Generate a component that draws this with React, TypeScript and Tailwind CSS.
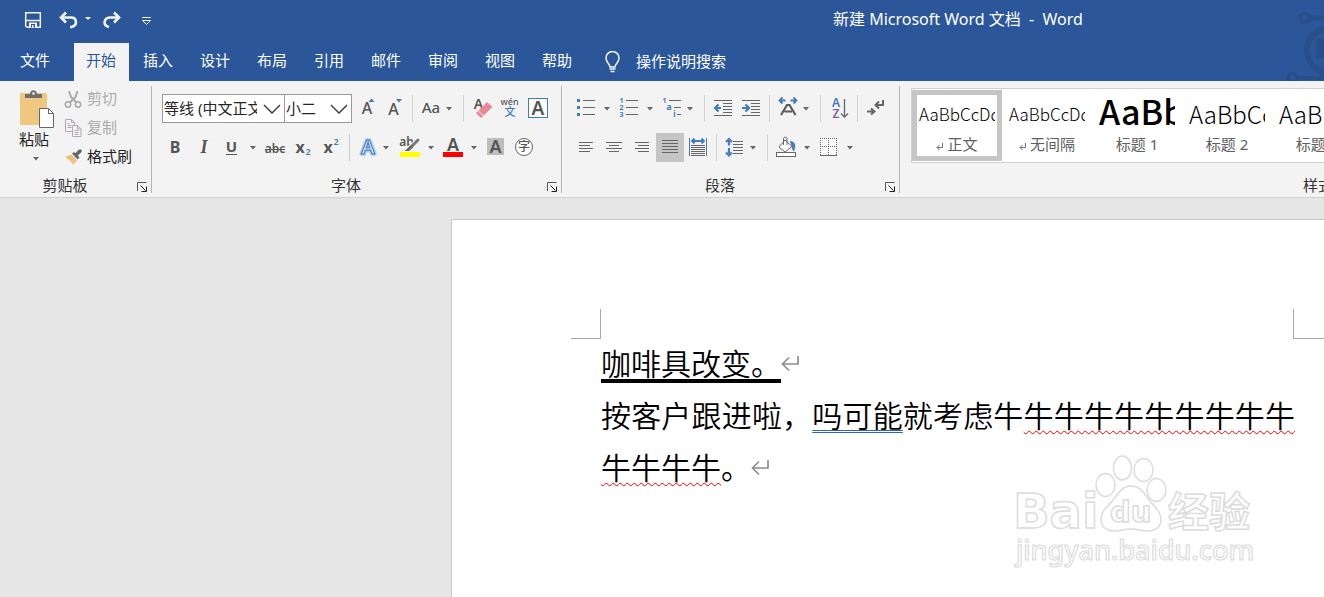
import type { ReactNode } from "react";

const INK = "#666666";
const BLUE = "#3f7cb8";
const UI = "'Noto Sans','Noto Sans CJK SC',sans-serif";

function Caret({ x }: { x: number }) {
  return <path d={`M${x - 3} 13h6l-3 3.5z`} fill={INK} />;
}

function Lines({ rows }: { rows: [number, number, number][] }) {
  return (
    <g stroke={INK} strokeWidth="1">
      {rows.map(([x1, x2, y], i) => (
        <line key={i} x1={x1} x2={x2} y1={y} y2={y} />
      ))}
    </g>
  );
}

type GlyphProps = {
  x: number;
  y: number;
  size: number;
  children: string;
  fill?: string;
  weight?: number;
  family?: string;
  style?: "italic";
};

function Glyph({ x, y, size, children, fill = "#555555", weight = 500, family = UI, style }: GlyphProps) {
  return (
    <text x={x} y={y} fontSize={size} fill={fill} fontWeight={weight} fontFamily={family} fontStyle={style} textAnchor="middle">
      {children}
    </text>
  );
}

const toolWidths = {
  small: "w-[27px]",
  single: "w-[28px]",
  menu: "w-[42px]",
  split: "w-[43px]",
};

function Tool({
  label,
  size = "single",
  active = false,
  children,
}: {
  label: string;
  size?: keyof typeof toolWidths;
  active?: boolean;
  children: ReactNode;
}) {
  return (
    <button
      type="button"
      aria-label={label}
      title={label}
      aria-pressed={active || undefined}
      className={`h-[29px] shrink-0 ${toolWidths[size]} ${active ? "bg-[#c5c5c5]" : "hover:bg-[#d8d8d8]"}`}
    >
      <svg className="block h-full w-full overflow-visible" aria-hidden="true">
        {children}
        {size === "menu" && <Caret x={32} />}
        {size === "split" && <Caret x={35} />}
      </svg>
    </button>
  );
}

function Divider() {
  return <span className="mx-1 h-[27px] w-px shrink-0 bg-[#d0d0d0]" />;
}

function Combo({ label, value, width }: { label: string; value: string; width: string }) {
  return (
    <div className={`relative h-[29px] shrink-0 ${width}`}>
      <select
        aria-label={label}
        defaultValue={value}
        className="h-full w-full appearance-none border border-[#999999] bg-white pr-[27px] pl-px text-[15px] text-[#262626]"
      >
        <option>{value}</option>
      </select>
      <svg className="pointer-events-none absolute top-[10px] right-1 h-[10px] w-[18px]" fill="none" stroke="#333" strokeWidth="1.3" aria-hidden="true">
        <path d="M1 1l8 8 8-8" />
      </svg>
    </div>
  );
}

function Group({ title, launcher = true, className = "", children }: { title: string; launcher?: boolean; className?: string; children: ReactNode }) {
  return (
    <section className={`flex min-h-[107px] shrink-0 flex-col justify-between ${launcher ? "border-r border-[#b4b4b4]" : ""} ${className}`}>
      {children}
      <footer className="flex h-[16px] items-center text-[15px] leading-[16px] text-[#333]">
        <span className="flex-1 text-center">{title}</span>
        {launcher && (
          <button type="button" aria-label={`${title}设置`} className="h-[14px] w-[21px] pt-1 pl-[7px]">
            <svg className="h-[10px] w-[10px]" fill="none" stroke="#555" aria-hidden="true">
              <path d="M.5 9V.5H9.500" />
              <path d="M3.500 3.500l5 5M9.500 4.500v5h-5" stroke="#222" />
            </svg>
          </button>
        )}
      </footer>
    </section>
  );
}

function ReturnMark() {
  return (
    <svg className="inline-block h-[18px] w-[18px] align-[2px]" fill="none" stroke="#8f8f8f" strokeWidth="1.7" aria-hidden="true">
      <path d="M17 1v8H1.500M8 2.500L1.500 9 8 15.500" />
    </svg>
  );
}

const tabs = ["开始", "插入", "设计", "布局", "引用", "邮件", "审阅", "视图", "帮助"];

function TitleBar() {
  return (
    <div className="flex h-[43px] items-center pb-1">
      <div className="flex w-[833px] shrink-0 items-center pl-[24px]">
        <button type="button" aria-label="保存" className="w-[34px]">
          <svg className="block h-[18px] w-[18px]" fill="none" stroke="#f3f3f3" aria-hidden="true">
            <path d="M1.700 1.700h14.600v14.600H3.500L1.700 15z" strokeWidth="1.5" />
            <path d="M2 9.500h14" strokeWidth="1.5" />
            <path d="M5 16.500v-5h8v5" fill="#f3f3f3" stroke="none" />
            <path d="M7 13h4v3.500H9.500V14H8v2.500H7z" fill="#2b579a" stroke="none" />
          </svg>
        </button>
        <button type="button" aria-label="撤消" className="w-[44px]">
          <svg className="block h-[18px] w-[36px]" fill="none" stroke="#f3f3f3" strokeWidth="2.6" aria-hidden="true">
            <path d="M3 6.500h10c6 0 7 8 .5 9.500H12" />
            <path d="M8 1.500L3 6.500l5 5" />
            <path d="M27 6h6l-3 3z" fill="#f3f3f3" stroke="none" />
          </svg>
        </button>
        <button type="button" aria-label="恢复" className="w-[39px]">
          <svg className="block h-[18px] w-[20px]" fill="none" stroke="#f3f3f3" strokeWidth="2.6" aria-hidden="true">
            <path d="M17 6.500H8C1.500 7 .5 14.500 7 16" />
            <path d="M12 1.500l5 5-5 5" />
          </svg>
        </button>
        <button type="button" aria-label="自定义快速访问工具栏">
          <svg className="mt-1 block h-[9px] w-[11px]" fill="none" stroke="#f3f3f3" aria-hidden="true">
            <path d="M1 .5h9M1.500 3.500h8l-4 4z" />
          </svg>
        </button>
      </div>
      <h1 className="pb-[2px] text-[16px] leading-[22px] whitespace-nowrap text-white">新建 Microsoft Word 文档&nbsp; -&nbsp; Word</h1>
    </div>
  );
}

function TabBar() {
  return (
    <nav className="flex h-[38px] text-[15px] text-white">
      <button type="button" className="mr-1 w-[70px] shrink-0 pb-1">
        文件
      </button>
      <div className="flex shrink-0 gap-[2px]">
        {tabs.map((tab, i) => (
          <button key={tab} type="button" className={`w-[55px] pr-px pb-1 ${i === 0 ? "bg-[#f3f3f3] text-[#2b579a]" : ""}`}>
            {tab}
          </button>
        ))}
      </div>
      <label className="flex items-center gap-[16px] pl-[20px]">
        <svg className="h-[22px] w-[15px]" fill="none" stroke="#f3f3f3" strokeWidth="1.5" aria-hidden="true">
          <path d="M5 16c0-3-4-4.500-4-9a6.500 6.500 0 0113 0c0 4.500-4 6-4 9z" />
          <path d="M4.500 18h6M5.500 20.500h4" />
        </svg>
        <input aria-label="操作说明搜索" placeholder="操作说明搜索" className="w-[140px] bg-transparent pb-px text-[15px] outline-none placeholder:text-white" />
      </label>
    </nav>
  );
}

function ClipboardGroup() {
  return (
    <Group title="剪贴板" className="w-[152px]">
      <div className="flex items-start pl-[15px]">
        <button type="button" className="mt-1 flex w-[49px] flex-col items-start pl-1 text-[15px] leading-[20px] text-[#222]">
          <svg className="h-[39px] w-[36px]" aria-hidden="true">
            <rect x="1" y="3" width="27" height="32" rx="1" fill="#edc87e" />
            <path d="M6 8V4h5c0-5 7-5 7 0h5v4z" fill="#6f6f6f" />
            <circle cx="14.500" cy="3.500" r="1.300" fill="#f3f3f3" />
            <path d="M20.500 18.500h9l5 5v14h-14z" fill="#fff" stroke="#666" />
            <path d="M29.500 18.500v5h5" fill="none" stroke="#666" />
          </svg>
          粘贴
          <svg className="h-[14px] w-[36px]" aria-hidden="true">
            <path d="M14 8h6l-3 3.500z" fill="#666" />
          </svg>
        </button>
        <div className="-mt-[2px] flex flex-col text-[15px] leading-[29px]">
          <button type="button" disabled className="flex items-center gap-[5px] text-[#ababab]">
            <svg className="h-[18px] w-[18px]" fill="none" stroke="#a9a9a9" strokeWidth="1.5" aria-hidden="true">
              <path d="M5 1l2 6 5.500 5.500M13.500 1l-2 6L6 12.500" strokeWidth="2" />
              <circle cx="4" cy="14.500" r="2.700" />
              <circle cx="14" cy="14.500" r="2.700" />
            </svg>
            剪切
          </button>
          <button type="button" disabled className="flex items-center gap-[5px] text-[#ababab]">
            <svg className="h-[18px] w-[18px]" fill="#f3f3f3" stroke="#b3a9b3" aria-hidden="true">
              <path d="M1.500.5h6l3 3v9h-9zM7.500.5v3h3M3.500 4.500h2M3.500 6.500h4M3.500 8.500h4" />
              <path d="M8.500 6.500h5l3.500 3.500v7.500h-8.500zM13.500 6.500v3.500h3M10.500 11.500h4M10.500 13.500h4M10.500 15.500h4" />
            </svg>
            复制
          </button>
          <button type="button" className="flex items-center gap-[5px] text-[#222]">
            <svg className="h-[18px] w-[18px]" aria-hidden="true">
              <path d="M1 9l6-2.500 6 6L9 17C7.500 13.500 5 12 1 9z" fill="#edc17e" />
              <path d="M8 5.500l2-1.500 5.500 5.500-2 2z" fill="#666" />
              <path d="M12.500 6.500L16 3" stroke="#666" strokeWidth="3.500" strokeLinecap="round" />
            </svg>
            格式刷
          </button>
        </div>
      </div>
    </Group>
  );
}

function FontGroup() {
  return (
    <Group title="字体" className="w-[410px]">
      <div className="flex flex-col gap-[10px] pt-2 pl-[10px]">
        <div className="flex items-center">
          <Combo label="字体" value="等线 (中文正文)" width="w-[123px]" />
          <div className="-ml-px mr-[2px] flex">
            <Combo label="字号" value="小二" width="w-[68px]" />
          </div>
          <Tool label="增大字号" size="small">
            <Glyph x={13} y={20} size={16}>A</Glyph>
            <path d="M14.500 8l3-3.500 3 3.500z" fill={BLUE} />
          </Tool>
          <Tool label="减小字号" size="small">
            <Glyph x={12.500} y={21} size={16}>A</Glyph>
            <path d="M15 5h6l-3 3.500z" fill={BLUE} />
          </Tool>
          <Divider />
          <Tool label="更改大小写" size="menu">
            <Glyph x={14} y={19} size={15}>Aa</Glyph>
          </Tool>
          <Divider />
          <Tool label="清除所有格式">
            <Glyph x={10.500} y={15} size={14} weight={600}>A</Glyph>
            <path d="M19 8l5.500 5L13 24l-5-5z" fill="#e8869a" />
            <path d="M10 16.500l5.500 5.500" stroke="#f3f3f3" />
          </Tool>
          <Tool label="拼音指南">
            <Glyph x={13.500} y={11} size={9}>wén</Glyph>
            <Glyph x={14} y={22} size={11} fill={BLUE}>文</Glyph>
          </Tool>
          <Tool label="字符边框">
            <rect x="4.500" y="4.500" width="19" height="19" fill="#fff" stroke={BLUE} />
            <Glyph x={14} y={21} size={19} weight={600}>A</Glyph>
          </Tool>
        </div>
        <div className="flex items-center">
          <Tool label="加粗">
            <Glyph x={13} y={20} size={16} weight={700}>B</Glyph>
          </Tool>
          <Tool label="倾斜">
            <Glyph x={14} y={20} size={18} weight={700} family="'Liberation Serif',serif" style="italic">I</Glyph>
          </Tool>
          <Tool label="下划线" size="split">
            <Glyph x={13.500} y={19} size={15} weight={700}>U</Glyph>
            <path d="M8 21.500h11" stroke="#555" />
          </Tool>
          <Tool label="删除线">
            <Glyph x={14} y={20} size={12} weight={600}>abc</Glyph>
            <path d="M4 16.500h20" stroke="#555" />
          </Tool>
          <Tool label="下标">
            <Glyph x={11} y={20} size={16} weight={700}>x</Glyph>
            <Glyph x={19} y={22} size={9} fill={BLUE} weight={600}>2</Glyph>
          </Tool>
          <Tool label="上标">
            <Glyph x={11} y={20} size={16} weight={700}>x</Glyph>
            <Glyph x={19} y={12} size={9} fill={BLUE} weight={600}>2</Glyph>
          </Tool>
          <Divider />
          <Tool label="文本效果" size="menu">
            <g fontSize="20" fontFamily={UI} fontWeight="600" textAnchor="middle" fill="#fff">
              <text x="14" y="21" stroke="#b9d5f0" strokeWidth="4" strokeLinejoin="round">A</text>
              <text x="14" y="21" stroke="#3f7cc4" strokeWidth="1.2">A</text>
            </g>
          </Tool>
          <Tool label="突出显示颜色" size="split">
            <Glyph x={10.500} y={13} size={12} weight={600}>ab</Glyph>
            <rect x="4" y="19" width="20" height="5" fill="#ffff00" />
            <path d="M22 7l-8 8" stroke="#f3f3f3" strokeWidth="5" />
            <path d="M22 7l-7 7" stroke="#777" strokeWidth="3" strokeLinecap="round" />
            <path d="M15 12l2 2.500-4 3.500H8.500z" fill="#666" />
          </Tool>
          <Tool label="字体颜色" size="split">
            <Glyph x={14} y={18} size={18} weight={600}>A</Glyph>
            <rect x="4" y="19" width="20" height="5" fill="#ff0000" />
          </Tool>
          <Tool label="字符底纹">
            <rect x="5" y="5" width="17" height="17" fill="#bdbdbd" />
            <Glyph x={13.500} y={20} size={18} weight={600}>A</Glyph>
          </Tool>
          <Tool label="带圈字符">
            <circle cx="14" cy="14" r="8.500" fill="#fff" stroke={INK} />
            <Glyph x={14} y={18} size={12}>字</Glyph>
          </Tool>
        </div>
      </div>
    </Group>
  );
}

function ParagraphGroup() {
  return (
    <Group title="段落" className="w-[338px]">
      <div className="flex flex-col gap-[10px] pt-2 pl-[10px]">
        <div className="flex items-center">
          <Tool label="项目符号" size="split">
            <path d="M5 5h3v3H5zM5 12h3v3H5zM5 19h3v3H5z" fill={BLUE} />
            <Lines rows={[[11, 23, 6.5], [11, 23, 13.5], [11, 23, 20.5]]} />
          </Tool>
          <Tool label="编号" size="split">
            <Glyph x={6.500} y={9} size={7} fill={BLUE} weight={700}>1</Glyph>
            <Glyph x={6.500} y={16} size={7} fill={BLUE} weight={700}>2</Glyph>
            <Glyph x={6.500} y={23} size={7} fill={BLUE} weight={700}>3</Glyph>
            <Lines rows={[[11, 23, 6.5], [11, 23, 13.5], [11, 23, 20.5]]} />
          </Tool>
          <Tool label="多级列表" size="menu">
            <Glyph x={6.500} y={9} size={7} fill={BLUE} weight={700}>1</Glyph>
            <Glyph x={11} y={16} size={9} fill={BLUE} weight={700}>a</Glyph>
            <Glyph x={16.500} y={23} size={8} fill={BLUE} weight={700}>i</Glyph>
            <Lines rows={[[11, 23, 6.5], [16, 23, 13.5], [19, 23, 20.5]]} />
          </Tool>
          <Divider />
          <Tool label="减少缩进量">
            <Lines rows={[[5, 23, 6.5], [14, 23, 9.5], [14, 23, 12.5], [14, 23, 15.5], [14, 23, 18.5], [5, 23, 21.5]]} />
            <path d="M12 14H6.500M9.500 10.500L6 14l3.500 3.500" stroke={BLUE} strokeWidth="2.2" fill="none" />
          </Tool>
          <Tool label="增加缩进量">
            <Lines rows={[[5, 23, 6.5], [14, 23, 9.5], [14, 23, 12.5], [14, 23, 15.5], [14, 23, 18.5], [5, 23, 21.5]]} />
            <path d="M5 14h6.500M8.500 10.500L12 14l-3.500 3.500" stroke={BLUE} strokeWidth="2.2" fill="none" />
          </Tool>
          <Divider />
          <Tool label="中文版式" size="menu">
            <path d="M11.500 6.500H6M8.500 3.500l-3 3 3 3M16.500 6.500H22M19.500 3.500l3 3-3 3" stroke={BLUE} strokeWidth="1.8" fill="none" />
            <path d="M7 21l6-10h2.500l6 10M10.500 17.500h7.500" stroke="#5c5c5c" strokeWidth="2.2" fill="none" />
          </Tool>
          <Divider />
          <Tool label="排序">
            <Glyph x={11} y={13} size={12} fill={BLUE} weight={600}>A</Glyph>
            <Glyph x={11} y={24} size={12} fill="#8a52a8" weight={600}>Z</Glyph>
            <path d="M19.500 5v18M16 19.500l3.500 3.500 3.500-3.500" stroke={INK} strokeWidth="1.300" fill="none" />
          </Tool>
          <Divider />
          <Tool label="显示编辑标记">
            <path d="M21 6v5h-7M17 7.500L13.500 11l3.500 3.500M5 17.500h7M9 14.500l3.500 3-3.500 3" stroke={INK} strokeWidth="2" fill="none" />
          </Tool>
        </div>
        <div className="flex items-center">
          <Tool label="左对齐">
            <Lines rows={[[7, 21, 9.5], [7, 18, 12.5], [7, 21, 15.5], [7, 18, 18.5]]} />
          </Tool>
          <Tool label="居中">
            <Lines rows={[[6, 22, 9.5], [9, 19, 12.5], [6, 22, 15.5], [9, 19, 18.5]]} />
          </Tool>
          <Tool label="右对齐">
            <Lines rows={[[7, 21, 9.5], [10, 21, 12.5], [7, 21, 15.5], [10, 21, 18.5]]} />
          </Tool>
          <Tool label="两端对齐" active>
            <Lines rows={[[6, 22, 7.5], [6, 22, 10.5], [6, 22, 13.5], [6, 22, 16.5], [6, 22, 19.5]]} />
          </Tool>
          <Tool label="分散对齐">
            <path d="M5.500 5v18M22.500 5v18" stroke={BLUE} />
            <path d="M8 8h12M10.500 5.500L8 8l2.500 2.500M17.500 5.500L20 8l-2.500 2.500" stroke={BLUE} strokeWidth="1.800" fill="none" />
            <Lines rows={[[7, 21, 12.5], [7, 21, 14.5], [7, 21, 16.5], [7, 21, 18.5], [7, 21, 20.5], [7, 21, 22.5]]} />
          </Tool>
          <Divider />
          <Tool label="行和段落间距" size="menu">
            <path d="M8 6v6.500M5 9l3-3 3 3M8 15v7M5 19.500l3 3 3-3" stroke="#4a7cc4" strokeWidth="2.2" fill="none" />
            <Lines rows={[[12, 22, 8.5], [12, 22, 11.5], [12, 22, 14.5], [12, 22, 17.5], [12, 22, 20.5]]} />
          </Tool>
          <Divider />
          <Tool label="底纹" size="split">
            <path d="M13 7l7 6.500-7 5.500-6-5z" fill="#fff" stroke={INK} />
            <path d="M11.500 12V6c0-2.500 3.500-2.500 3.500 0v6" stroke={INK} fill="none" />
            <path d="M18 8c5 .5 6.500 4 4 10.500-1-1-2-2-2-4z" fill={BLUE} />
            <rect x="4.500" y="19.500" width="19" height="4" fill="#fff" stroke={INK} />
          </Tool>
          <Tool label="边框" size="split">
            <rect x="5" y="5" width="17" height="17" fill="#fff" />
            <path d="M5.500 5v17M21.500 5v17M13.500 5v17M5 5.500h17M5 13.500h17" stroke={INK} strokeDasharray="1 1" />
            <path d="M5 22.500h17" stroke={INK} />
          </Tool>
        </div>
      </div>
    </Group>
  );
}

const styles = [
  { name: "正文", mark: true, sample: "AaBbCcDd", look: "text-[17px] font-light" },
  { name: "无间隔", mark: true, sample: "AaBbCcDd", look: "text-[17px] font-light" },
  { name: "标题 1", mark: false, sample: "AaBbCc", look: "pb-2 text-[34px] font-medium" },
  { name: "标题 2", mark: false, sample: "AaBbCc", look: "text-[24px] font-light" },
  { name: "标题 3", mark: false, sample: "AaBbCc", look: "text-[24px] font-light" },
];

function StylesGroup() {
  return (
    <Group title="样式" launcher={false} className="w-[825px] pl-[11px]">
      <div className="mt-[2px] flex h-[75px] overflow-hidden border border-[#d0d0d0] bg-white py-px">
        {styles.map((style, i) => (
          <button
            key={style.name}
            type="button"
            className={`flex w-[90px] shrink-0 flex-col items-center border-[5px] px-[2px] ${i === 0 ? "border-[#c5c5c5]" : "border-transparent"}`}
          >
            <span className={`flex h-[38px] w-full items-center overflow-hidden whitespace-nowrap font-['Noto_Sans_CJK_SC',sans-serif] text-black ${style.look}`}>
              {style.sample}
            </span>
            <span className="flex items-center gap-1 text-[15px] leading-[22px] whitespace-nowrap text-[#606060]">
              {style.mark && (
                <svg className="mt-1 h-[7px] w-[7px]" fill="none" stroke="#707070" aria-hidden="true">
                  <path d="M6.500 0v4.500H1M3.500 2L1 4.500 3.500 7" />
                </svg>
              )}
              {style.name}
            </span>
          </button>
        ))}
      </div>
    </Group>
  );
}

function HeaderArt() {
  return (
    <svg className="pointer-events-none absolute top-0 right-0 h-[81px] w-[40px]" fill="none" stroke="#284f8a" aria-hidden="true">
      <circle cx="20.500" cy="18" r="4.500" strokeWidth="3.600" />
      <path d="M25 18h15" strokeWidth="5" />
      <circle cx="45" cy="50.500" r="22" strokeWidth="6" />
      <path d="M32 38h8v21h-8z" fill="#284f8a" stroke="none" />
      <circle cx="8.500" cy="78" r="4.500" strokeWidth="3.600" />
      <path d="M13 78h27" strokeWidth="4" />
    </svg>
  );
}

function Watermark() {
  return (
    <svg className="pointer-events-none absolute top-[232px] left-[560px] h-[124px] w-[245px]" fill="#fff" stroke="#dcdcdc" strokeWidth="1.5" aria-hidden="true">
      <ellipse cx="110.500" cy="16" rx="9" ry="12" />
      <ellipse cx="131.500" cy="18" rx="9.500" ry="11.500" />
      <ellipse cx="93.500" cy="33" rx="9.500" ry="11.500" />
      <ellipse cx="144.500" cy="38" rx="9.500" ry="11.500" />
      <path d="M119 34c9 0 12 6 18 14 7 8 12 12 12 20 0 7-6 11-13 11-7 0-10-2-17-2s-10 2-17 2c-8 0-13-5-13-12 0-8 6-11 12-19 6-8 10-14 18-14z" />
      <g fontWeight="700" fontFamily="'DejaVu Sans',sans-serif">
        <text x="1" y="76" fontSize="48">Bai</text>
        <text x="98" y="70" fontSize="29">du</text>
        <text x="156" y="75" fontSize="41" fontFamily="'Noto Sans CJK SC',sans-serif">经验</text>
      </g>
      <text x="4" y="108" fontSize="27" fontWeight="500" fontFamily="'Noto Sans',sans-serif" strokeWidth="1.200">jingyan.baidu.com</text>
    </svg>
  );
}

export default function App() {
  return (
    <div className="flex min-h-screen flex-col overflow-hidden bg-[#e6e6e6] font-['Noto_Sans','Noto_Sans_CJK_SC',sans-serif]">
      <header className="relative bg-[#2b579a]">
        <HeaderArt />
        <TitleBar />
        <TabBar />
      </header>
      <div className="flex overflow-hidden border-b border-[#d0d0d0] bg-[#f3f3f3] pt-[5px] pb-1">
        <ClipboardGroup />
        <FontGroup />
        <ParagraphGroup />
        <StylesGroup />
      </div>
      <main className="flex flex-1 overflow-hidden pt-[21px] pl-[451px]">
        <article className="relative w-[992px] shrink-0 border-t border-l border-[#c6c6c6] bg-white pt-[89px]">
          <div className="flex justify-between px-[119px]" aria-hidden="true">
            <span className="h-[30px] w-[30px] border-r border-b border-[#a8a8a8]" />
            <span className="h-[30px] w-[31px] border-b border-l border-[#a8a8a8]" />
          </div>
          <div className="-mt-[3px] ml-[149px] w-[694px] text-justify font-['Noto_Sans_CJK_SC',sans-serif] text-[30px] leading-[52px] font-[350] text-black">
            <p>
              <span className="underline decoration-4 underline-offset-[4px] [text-decoration-skip-ink:none]">咖啡具改变。</span>
              <ReturnMark />
            </p>
            <p>
              按客户跟进啦，
              <span className="underline decoration-[#2a62c8] decoration-double decoration-1 underline-offset-[3px] [text-decoration-skip-ink:none]">吗可能</span>
              就考虑牛
              <span className="underline decoration-[#ff0000] decoration-wavy decoration-1 underline-offset-[3px] [text-decoration-skip-ink:none]">
                牛牛牛牛牛牛牛牛牛牛牛牛牛
              </span>
              。<ReturnMark />
            </p>
          </div>
          <Watermark />
        </article>
      </main>
    </div>
  );
}
